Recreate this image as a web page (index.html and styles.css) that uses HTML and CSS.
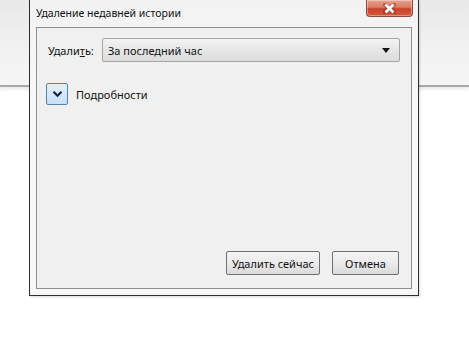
FILE: index.html
```html
<!doctype html>
<html lang="ru">
    <head>
        <meta charset="UTF-8" />
        <meta name="viewport" content="width=device-width, initial-scale=1.0" />
        <title>Удаление недавней истории</title>
        <link rel="stylesheet" href="styles.css">
    </head>
    <body>
        <div class="backdrop"></div>

        <div class="window">
            <div class="titlebar">
                <span class="title">Удаление недавней истории</span>
                <button class="close" aria-label="Закрыть">
                    <svg width="13" height="11" viewBox="0 0 13 11">
                        <path d="M2 1.5 L11 9.5 M11 1.5 L2 9.5" stroke="#5a2a20" stroke-width="4.4" stroke-linecap="round" opacity="0.4" />
                        <path d="M2.5 1.5 L10.5 9.5 M10.5 1.5 L2.5 9.5" stroke="#ffffff" stroke-width="2.6" />
                    </svg>
                </button>
            </div>

            <div class="content">
                <div class="row">
                    <label for="range" class="label">Удали<u>т</u>ь:</label>
                    <div class="select" id="range">
                        <span>За последний час</span>
                        <span class="arrow"></span>
                    </div>
                </div>

                <div class="details">
                    <button class="expander" aria-label="Подробности">
                        <svg width="11" height="8" viewBox="0 0 11 8">
                            <path d="M1.5 1.8 L5.5 5.8 L9.5 1.8" fill="none" stroke="#16263a" stroke-width="2.2" />
                        </svg>
                    </button>
                    <span>Подробности</span>
                </div>

                <div class="actions">
                    <button class="btn btn-default">Удалить сейчас</button>
                    <button class="btn btn-cancel">Отмена</button>
                </div>
            </div>
        </div>
    </body>
</html>
```

FILE: styles.css
```css
html,
body {
    margin: 0;
    height: 100%;
}
body {
    background: #ffffff;
    font-family: "Noto Sans", "Open Sans", sans-serif;
    font-size: 11px;
    color: #111;
    position: relative;
    overflow: hidden;
}
/* page behind the dialog */
.backdrop {
    height: 85px;
    background: linear-gradient(#e9e9e9, #f2f2f2 60%, #f5f5f5);
    border-bottom: 2px solid #a9a9a9;
    box-shadow: 0 2px 4px rgba(0, 0, 0, 0.1);
}
.window {
    position: absolute;
    left: 29px;
    top: 0;
    width: 390px;
    height: 296px;
    box-sizing: border-box;
    border: 1px solid #2e2e2e;
    border-top: none;
    background: linear-gradient(#f2f2f2, #f7f7f7 30%, #f7f7f7);
    box-shadow: 1px 1px 2px rgba(0, 0, 0, 0.15);
    display: flex;
    flex-direction: column;
    padding: 0 6px 6px 6px;
}
.titlebar {
    height: 27px;
    display: flex;
    justify-content: space-between;
    align-items: flex-start;
    flex-shrink: 0;
}
.title {
    padding-top: 6px;
    font-size: 10.5px;
    color: #111;
}
.close {
    width: 47px;
    height: 17px;
    margin-right: -1px;
    border: 1px solid #8a4a3e;
    border-top: none;
    border-radius: 0 0 4px 4px;
    background: linear-gradient(#e9a493, #dc7a62 45%, #c9432b 55%, #d35a3c);
    display: flex;
    align-items: center;
    justify-content: center;
    padding: 0;
    box-shadow: inset 0 0 0 1px rgba(255, 255, 255, 0.35);
}
.content {
    flex: 1;
    background: #f0f0f0;
    border: 1px solid #8e8e8e;
    padding: 10px 11px 13px 11px;
    display: flex;
    flex-direction: column;
}
.row {
    display: flex;
    align-items: center;
}
.label {
    width: 54px;
    color: #111;
}
.select {
    flex: 1;
    height: 22px;
    border: 1px solid #a5a5a5;
    border-radius: 2px;
    background: linear-gradient(#f4f4f4, #e6e6e6 50%, #dcdcdc);
    display: flex;
    align-items: center;
    justify-content: space-between;
    padding: 0 9px 0 5px;
}
.arrow {
    width: 0;
    height: 0;
    border-left: 4px solid transparent;
    border-right: 4px solid transparent;
    border-top: 5px solid #111;
}
.details {
    display: flex;
    align-items: center;
    margin-top: 21px;
    margin-left: -2px;
}
.expander {
    width: 22px;
    height: 22px;
    margin-right: 8px;
    padding: 0;
    border: 1px solid #4f86b0;
    border-radius: 2px;
    background: linear-gradient(#e3f0fc, #c6e0f8);
    display: flex;
    align-items: center;
    justify-content: center;
}
.actions {
    margin-top: auto;
    display: flex;
    justify-content: flex-end;
    gap: 12px;
    padding-right: 1px;
}
.btn {
    height: 24px;
    padding: 0 4px;
    border: 1px solid #707070;
    border-radius: 2px;
    background: linear-gradient(#f4f4f4, #ebebeb 50%, #dadada);
    font-family: inherit;
    font-size: 11px;
    color: #111;
    white-space: nowrap;
}
.btn-default {
    width: 94px;
}
.btn-cancel {
    width: 67px;
}
```
